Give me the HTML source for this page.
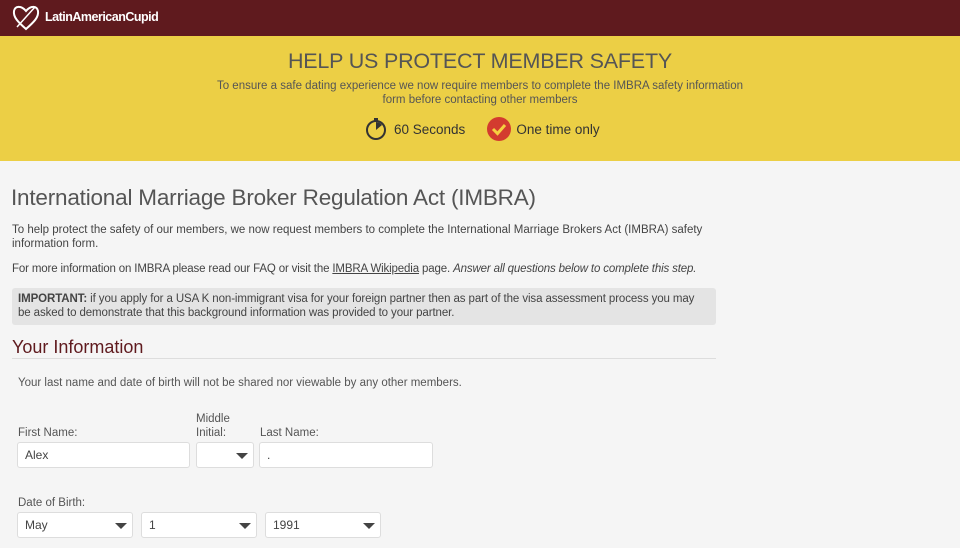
<!DOCTYPE html>
<html><head><meta charset="utf-8"><style>
*{margin:0;padding:0;box-sizing:border-box}
body{width:960px;height:548px;overflow:hidden;background:#f5f5f5;font-family:"Liberation Sans",sans-serif;color:#444}
.hdr{height:36px;background:#5f1a1e;position:relative}
.logo{position:absolute;left:45px;top:10px;color:#fff;font-weight:bold;font-size:12.5px;letter-spacing:-0.5px}
.band{height:125px;background:#eccf45;text-align:center;position:relative}
.band h1{font-weight:normal;font-size:21.5px;color:#555;position:absolute;top:13px;width:100%;letter-spacing:-0.2px}
.band p{position:absolute;width:100%;font-size:11.5px;color:#555;line-height:14px;top:43px}
.badges{position:absolute;top:81px;left:365px;font-size:13.5px;color:#333;display:flex;align-items:center}
.c{position:absolute;left:12px;width:704px;font-size:11.5px;line-height:14px;color:#444;letter-spacing:0}
h2{position:absolute;left:11px;top:185px;font-weight:normal;font-size:22.5px;color:#555;letter-spacing:-0.2px}
.imp{position:absolute;left:12px;top:288px;width:704px;height:37px;background:#e4e4e4;border-radius:3px;padding:4px 6px;font-size:11.5px;line-height:14px;letter-spacing:-0.1px}
h3{position:absolute;left:12px;top:337px;font-weight:normal;font-size:18px;color:#5f1a1e;width:704px;border-bottom:1px solid #ddd;padding-bottom:2px;height:22px}
.lbl{position:absolute;font-size:11.5px;color:#555;line-height:14px}
.in{position:absolute;height:26px;background:#fff;border:1px solid #ddd;border-radius:3px;font-size:12px;color:#444;padding:5px 0 0 7px}
.arr{position:absolute;right:5px;top:10px;width:0;height:0;border-left:6px solid transparent;border-right:6px solid transparent;border-top:6px solid #444}
</style></head><body>
<div class="hdr">
<svg style="position:absolute;left:11px;top:3px" width="30" height="29" viewBox="0 0 30 29"><path d="M15 26 C7 19 2 14 3 8 C4 3 10 2 15 8 C20 2 26 3 27 8 C28 14 23 19 15 26Z" fill="none" stroke="#fff" stroke-width="2"/><path d="M6 24 L24 4" stroke="#fff" stroke-width="1.5"/></svg>
<div class="logo">LatinAmericanCupid</div></div>
<div class="band"><h1>HELP US PROTECT MEMBER SAFETY</h1>
<p>To ensure a safe dating experience we now require members to complete the IMBRA safety information<br>form before contacting other members</p>
<div class="badges">
<svg width="22" height="24" viewBox="0 0 22 24"><circle cx="11" cy="13" r="9" fill="none" stroke="#333" stroke-width="2"/><rect x="9" y="1" width="4" height="3" fill="#333"/><path d="M11 13 L11 5 A8 8 0 0 1 17 8Z" fill="#333"/></svg>
<span style="margin-left:7px">60 Seconds</span>
<svg style="margin-left:22px" width="24" height="24" viewBox="0 0 24 24"><circle cx="12" cy="12" r="12" fill="#d33b2f"/><path d="M6 12 L10.5 16.5 L18 8" fill="none" stroke="#f5d040" stroke-width="3"/></svg>
<span style="margin-left:5px">One time only</span></div></div>
<h2>International Marriage Broker Regulation Act (IMBRA)</h2>
<div class="c" style="top:223px">To help protect the safety of our members, we now request members to complete the International Marriage Brokers Act (IMBRA) safety information form.</div>
<div class="c" style="top:262px;white-space:nowrap;letter-spacing:-0.15px">For more information on IMBRA please read our FAQ or visit the <u>IMBRA Wikipedia</u> page. <i>Answer all questions below to complete this step.</i></div>
<div class="imp"><b>IMPORTANT:</b> if you apply for a USA K non-immigrant visa for your foreign partner then as part of the visa assessment process you may be asked to demonstrate that this background information was provided to your partner.</div>
<h3>Your Information</h3>
<div class="lbl" style="left:18px;top:376px">Your last name and date of birth will not be shared nor viewable by any other members.</div>
<div class="lbl" style="left:18px;top:426px">First Name:</div>
<div class="lbl" style="left:196px;top:412px">Middle<br>Initial:</div>
<div class="lbl" style="left:260px;top:426px">Last Name:</div>
<div class="in" style="left:17px;top:442px;width:173px">Alex</div>
<div class="in" style="left:196px;top:442px;width:58px"><span class="arr"></span></div>
<div class="in" style="left:259px;top:442px;width:174px">.</div>
<div class="lbl" style="left:18px;top:496px">Date of Birth:</div>
<div class="in" style="left:17px;top:512px;width:116px">May<span class="arr"></span></div>
<div class="in" style="left:141px;top:512px;width:116px">1<span class="arr"></span></div>
<div class="in" style="left:265px;top:512px;width:116px">1991<span class="arr"></span></div>
</body></html>
